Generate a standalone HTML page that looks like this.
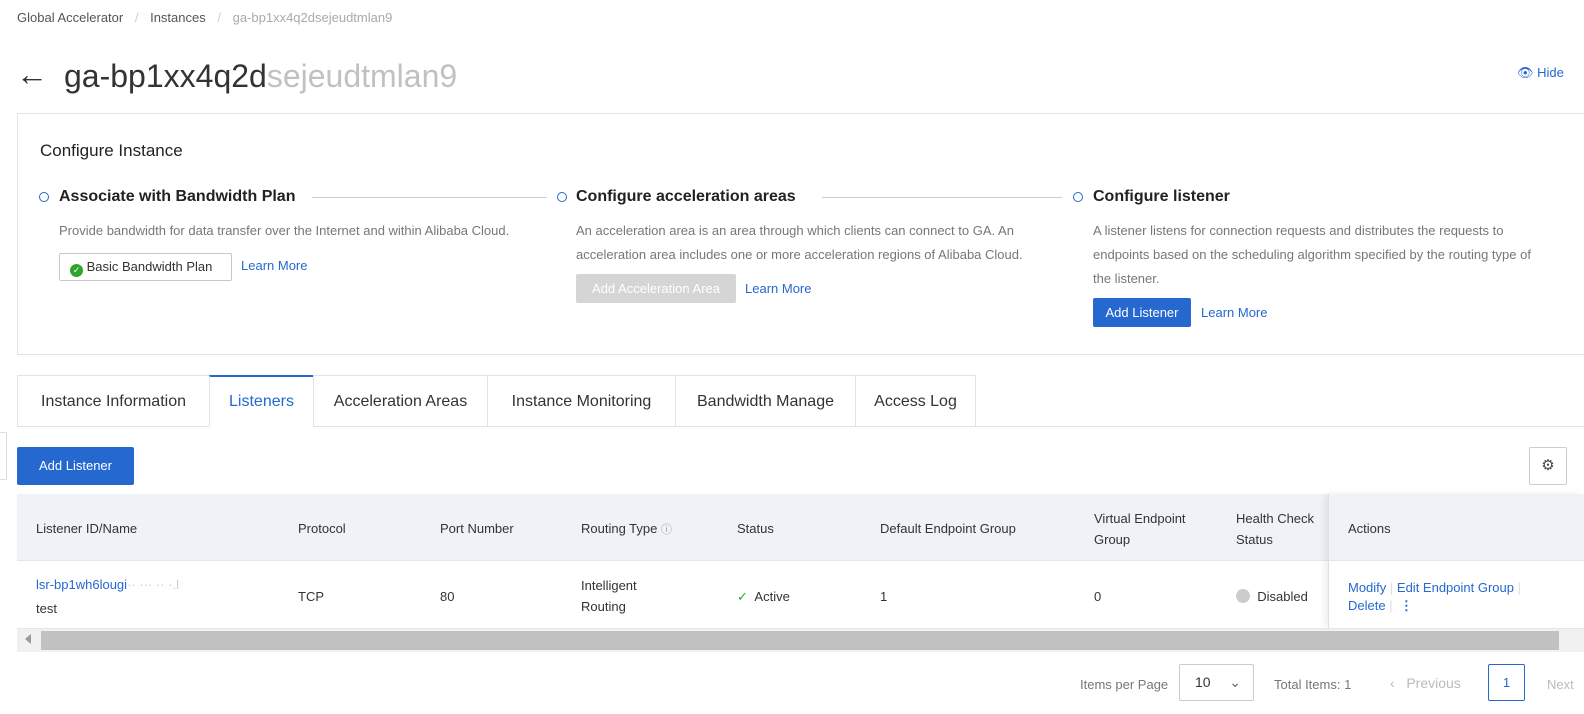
<!DOCTYPE html>
<html><head><meta charset="utf-8"><style>
*{box-sizing:border-box;margin:0;padding:0}
body{width:1584px;height:714px;overflow:hidden;background:#fff;font-family:"Liberation Sans",sans-serif;color:#333;position:relative;font-size:13px}
.a{position:absolute;white-space:nowrap}
.link{color:#2468d0}
.step{font-size:16px;font-weight:bold;color:#222}
.desc{font-size:13px;color:#777;line-height:24px}
.circ{width:10px;height:10px;border:1.5px solid #2468d0;border-radius:50%}
.tab{position:absolute;top:375px;height:52px;border:1px solid #e3e3e3;font-size:16px;color:#333;text-align:center;line-height:52px;background:#fff}
.th{position:absolute;font-size:13px;color:#333;line-height:21px}
.th.link{color:#2468d0}
</style></head><body>
<div class="a" style="left:17px;top:10px;font-size:13px;color:#555">Global Accelerator <span style="color:#ccc;margin:0 8px">/</span> Instances <span style="color:#ccc;margin:0 8px">/</span> <span style="color:#aaa">ga-bp1xx4q2dsejeudtmlan9</span></div>
<div class="a" style="left:16px;top:52px;font-size:32px;color:#333;line-height:44px">&#8592;</div>
<div class="a" style="left:64px;top:54px;font-size:32px;color:#333;line-height:44px">ga-bp1xx4q2d<span style="color:#999;opacity:.6">sejeudtmlan9</span></div>
<div class="a link" style="left:1517px;top:65px;font-size:13px">&#128065; Hide</div>
<div class="a" style="left:17px;top:113px;width:1580px;height:242px;border:1px solid #e3e3e3"></div>
<div class="a" style="left:40px;top:141px;font-size:17px;color:#222">Configure Instance</div>
<div class="a circ" style="left:39px;top:192px"></div>
<div class="a step" style="left:59px;top:188px">Associate with Bandwidth Plan</div>
<div class="a" style="left:312px;top:197px;width:235px;border-top:1px solid #ccc"></div>
<div class="a desc" style="left:59px;top:219px">Provide bandwidth for data transfer over the Internet and within Alibaba Cloud.</div>
<div class="a" style="left:59px;top:253px;width:173px;height:28px;border:1px solid #c8c8c8;border-radius:2px;font-size:13px;line-height:26px;padding-left:10px"><span style="display:inline-block;width:13px;height:13px;border-radius:50%;background:#2da52d;color:#fff;font-size:9px;line-height:13px;text-align:center;vertical-align:-2px">✓</span> Basic Bandwidth Plan</div>
<div class="a link" style="left:241px;top:258px">Learn More</div>
<div class="a circ" style="left:557px;top:192px"></div>
<div class="a step" style="left:576px;top:188px">Configure acceleration areas</div>
<div class="a" style="left:822px;top:197px;width:240px;border-top:1px solid #ccc"></div>
<div class="a desc" style="left:576px;top:219px">An acceleration area is an area through which clients can connect to GA. An<br>acceleration area includes one or more acceleration regions of Alibaba Cloud.</div>
<div class="a" style="left:576px;top:274px;width:160px;height:29px;background:#d5d5d5;color:#fff;font-size:13px;line-height:29px;text-align:center;border-radius:2px">Add Acceleration Area</div>
<div class="a link" style="left:745px;top:281px">Learn More</div>
<div class="a circ" style="left:1073px;top:192px"></div>
<div class="a step" style="left:1093px;top:188px">Configure listener</div>
<div class="a desc" style="left:1093px;top:219px">A listener listens for connection requests and distributes the requests to<br>endpoints based on the scheduling algorithm specified by the routing type of<br>the listener.</div>
<div class="a" style="left:1093px;top:298px;width:98px;height:29px;background:#2468d0;color:#fff;font-size:13px;line-height:29px;text-align:center;border-radius:2px">Add Listener</div>
<div class="a link" style="left:1201px;top:305px">Learn More</div>
<div class="a" style="left:17px;top:426px;width:1567px;border-top:1px solid #e3e3e3"></div>
<div class="tab" style="left:17px;width:193px">Instance Information</div>
<div class="tab" style="left:209px;width:105px;border-top:2px solid #2468d0;border-bottom-color:#fff;color:#2468d0;line-height:50px">Listeners</div>
<div class="tab" style="left:313px;width:175px">Acceleration Areas</div>
<div class="tab" style="left:487px;width:189px">Instance Monitoring</div>
<div class="tab" style="left:675px;width:181px">Bandwidth Manage</div>
<div class="tab" style="left:855px;width:121px">Access Log</div>
<div class="a" style="left:-4px;top:432px;width:11px;height:48px;border:1px solid #ddd;background:#fff"></div>
<div class="a" style="left:17px;top:447px;width:117px;height:38px;background:#2468d0;color:#fff;font-size:13px;line-height:38px;text-align:center;border-radius:2px">Add Listener</div>
<div class="a" style="left:1529px;top:447px;width:38px;height:38px;border:1px solid #ccc;border-radius:2px;text-align:center;line-height:36px;font-size:15px;color:#444">⚙</div>
<div class="a" style="left:17px;top:494px;width:1567px;height:67px;background:#eff2f6;border-bottom:1px solid #e3e6ea"></div>
<div class="th" style="left:36px;top:518px">Listener ID/Name</div>
<div class="th" style="left:298px;top:518px">Protocol</div>
<div class="th" style="left:440px;top:518px">Port Number</div>
<div class="th" style="left:581px;top:518px">Routing Type <span style="color:#999;font-size:11px">ⓘ</span></div>
<div class="th" style="left:737px;top:518px">Status</div>
<div class="th" style="left:880px;top:518px">Default Endpoint Group</div>
<div class="th" style="left:1094px;top:508px">Virtual Endpoint<br>Group</div>
<div class="th" style="left:1236px;top:508px">Health Check<br>Status</div>
<div class="a" style="left:1328px;top:494px;width:256px;height:134px;border-left:1px solid #e0e0e0;box-shadow:-4px 0 6px rgba(0,0,0,.06)"></div>
<div class="th" style="left:1348px;top:518px">Actions</div>
<div class="th link" style="left:36px;top:574px">lsr-bp1wh6lougi<span style="color:#ccd">·· ··· ·· ·.l</span></div>
<div class="th" style="left:36px;top:598px">test</div>
<div class="th" style="left:298px;top:586px">TCP</div>
<div class="th" style="left:440px;top:586px">80</div>
<div class="th" style="left:581px;top:575px">Intelligent<br>Routing</div>
<div class="th" style="left:737px;top:586px"><span style="color:#2da52d">✓</span>&nbsp; Active</div>
<div class="th" style="left:880px;top:586px">1</div>
<div class="th" style="left:1094px;top:586px">0</div>
<div class="th" style="left:1236px;top:586px"><span style="display:inline-block;width:14px;height:14px;border-radius:50%;background:#ccc;vertical-align:-2px"></span>&nbsp; Disabled</div>
<div class="th link" style="left:1348px;top:577px">Modify <span style="color:#ddd">|</span> Edit Endpoint Group <span style="color:#ddd">|</span></div>
<div class="th link" style="left:1348px;top:595px">Delete <span style="color:#ddd">|</span> &nbsp;<b>⋮</b></div>
<div class="a" style="left:17px;top:628px;width:1567px;height:24px;background:#f1f1f1;border-top:1px solid #e6e6e6"></div>
<div class="a" style="left:41px;top:631px;width:1518px;height:19px;background:#c1c1c1"></div>
<div class="a" style="left:25px;top:634px;width:0;height:0;border-top:5px solid transparent;border-bottom:5px solid transparent;border-right:6px solid #999"></div>
<div class="a" style="left:1080px;top:677px;color:#777">Items per Page</div>
<div class="a" style="left:1179px;top:664px;width:75px;height:37px;border:1px solid #ccc;border-radius:2px;line-height:35px;padding-left:15px;font-size:14px">10 <span style="position:absolute;right:12px;color:#666">&#8964;</span></div>
<div class="a" style="left:1274px;top:677px;color:#777">Total Items: 1</div>
<div class="a" style="left:1390px;top:675px;color:#bbb;font-size:14px">&#8249;&nbsp;&nbsp; Previous</div>
<div class="a" style="left:1488px;top:664px;width:37px;height:37px;border:1px solid #2468d0;border-radius:2px;color:#2468d0;text-align:center;line-height:35px;font-size:13px">1</div>
<div class="a" style="left:1547px;top:677px;color:#bbb">Next</div>
</body></html>
